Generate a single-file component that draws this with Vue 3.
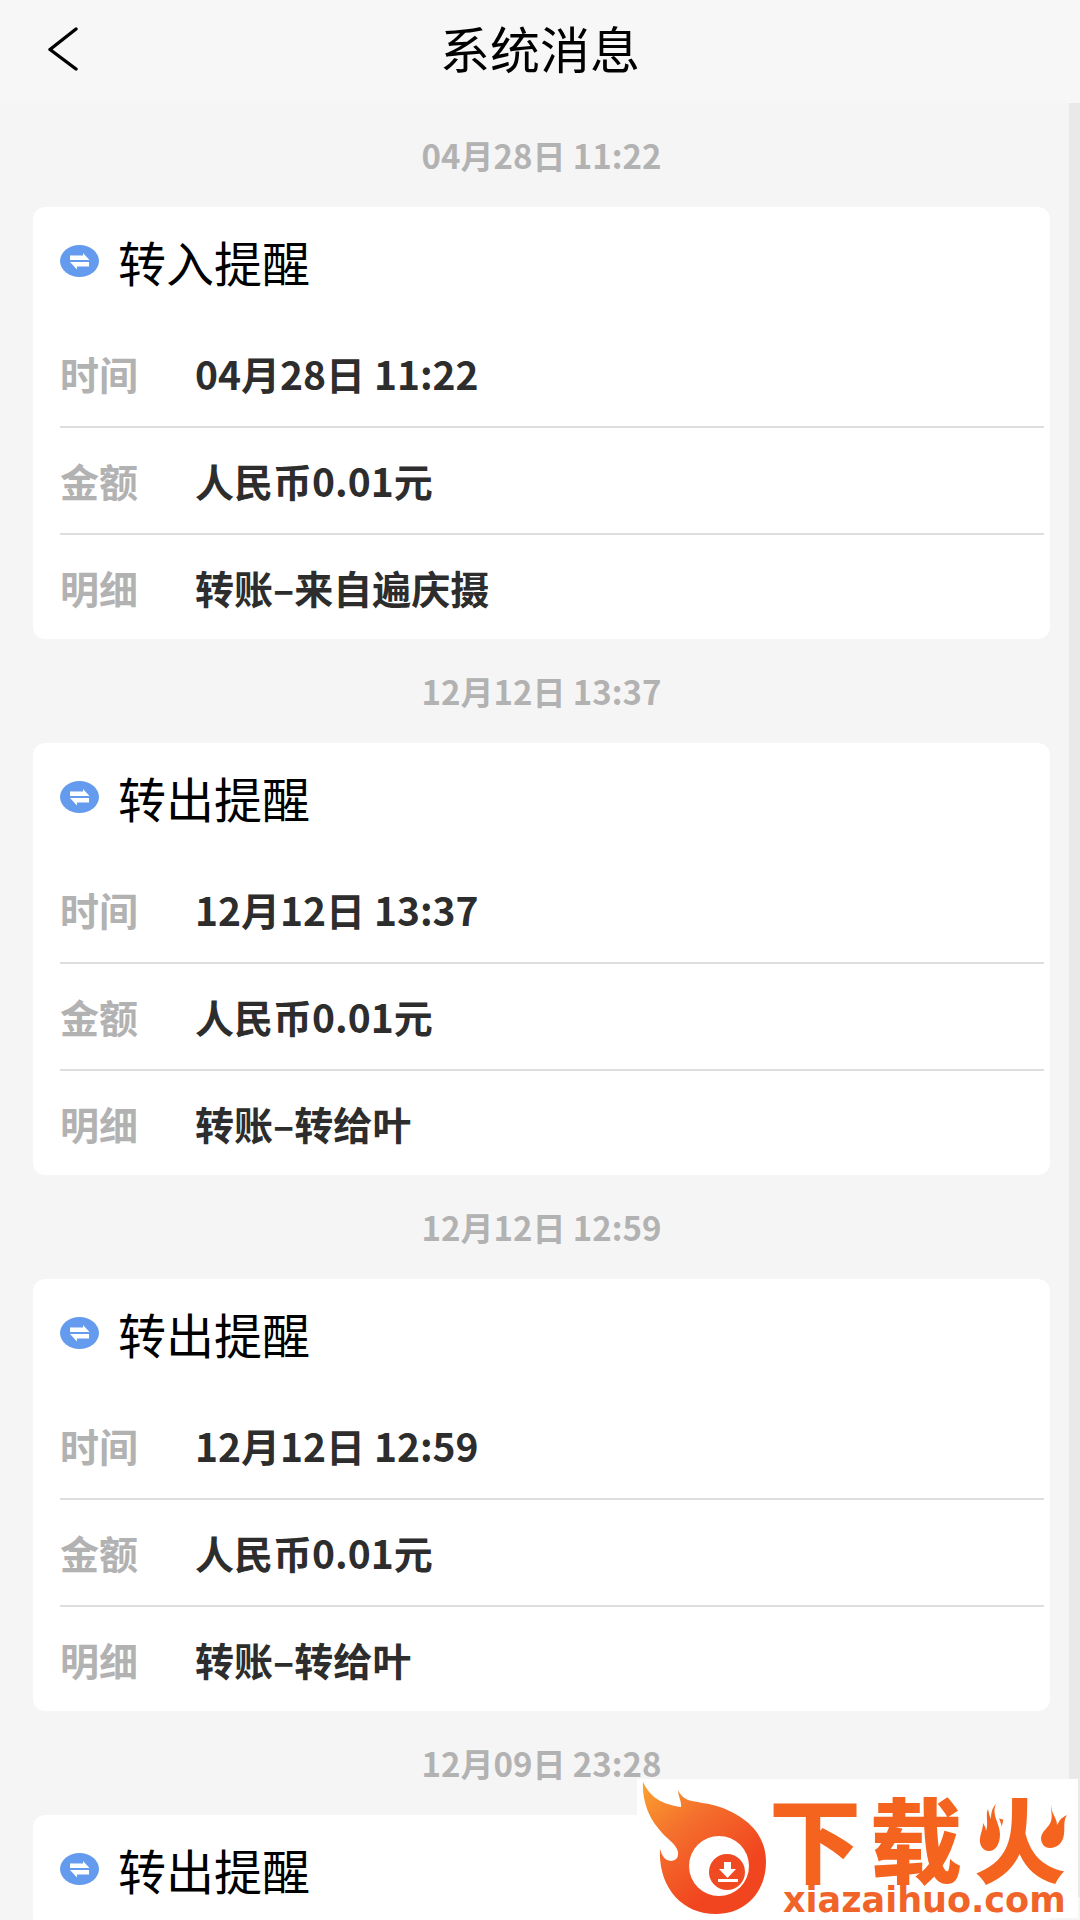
<script setup>
const groups = [
  {
    date: '04月28日 11:22',
    title: '转入提醒',
    rows: [
      { label: '时间', value: '04月28日 11:22' },
      { label: '金额', value: '人民币0.01元' },
      { label: '明细', value: '转账–来自遍庆摄' },
    ],
  },
  {
    date: '12月12日 13:37',
    title: '转出提醒',
    rows: [
      { label: '时间', value: '12月12日 13:37' },
      { label: '金额', value: '人民币0.01元' },
      { label: '明细', value: '转账–转给叶' },
    ],
  },
  {
    date: '12月12日 12:59',
    title: '转出提醒',
    rows: [
      { label: '时间', value: '12月12日 12:59' },
      { label: '金额', value: '人民币0.01元' },
      { label: '明细', value: '转账–转给叶' },
    ],
  },
  { date: '12月09日 23:28', title: '转出提醒', rows: [] },
]
</script>

<template>
  <div class="screen">
    <header class="bar">
      <button class="back" type="button" aria-label="返回">
        <svg width="32" height="44" viewBox="0 0 32 44" fill="none" stroke="#000" stroke-width="3.400" stroke-linecap="round" stroke-linejoin="round">
          <path d="M29 2 3 22.500 29 42" />
        </svg>
      </button>
      <h1>系统消息</h1>
    </header>

    <div class="body">
      <main class="list">
        <section v-for="(group, i) in groups" :key="i">
          <time class="date">{{ group.date }}</time>
          <article class="card">
            <h2>
              <svg width="39" height="32" viewBox="0 0 39 32">
                <ellipse cx="19.500" cy="16" rx="19.500" ry="16" fill="#659bee" />
                <path d="M10 10.500H23V8L29.500 15H10ZM29 21.500H17V24.500L10 17H29Z" fill="#fff" />
              </svg>
              <span>{{ group.title }}</span>
            </h2>
            <dl v-if="group.rows.length">
              <div v-for="row in group.rows" :key="row.label" class="row">
                <dt>{{ row.label }}</dt>
                <dd>{{ row.value }}</dd>
              </div>
            </dl>
          </article>
        </section>
      </main>
      <div class="track"></div>
    </div>

    <svg class="brand" width="441" height="139" viewBox="0 0 441 139">
      <defs>
        <linearGradient id="fire" x1="0" y1="0" x2="0.600" y2="0.800">
          <stop offset="0" stop-color="#fba32f" />
          <stop offset="0.450" stop-color="#f4702d" />
          <stop offset="1" stop-color="#f1451f" />
        </linearGradient>
      </defs>
      <rect width="441" height="139" fill="#fff" />
      <path
        fill="url(#fire)"
        d="M6 3C13 18 24 25 44 28C45 23 41 17 41 11Q44 18 51 21C62 24 72 24 83 28C110 38 129 55 129 83C129 113 108 135 79 135C45 135 21 108 23 70Q26 82 34 82Q42 81 41 73C39 64 29 60 21 49C11 37 5 20 6 3Z"
      />
      <circle cx="82" cy="87" r="30" fill="#fff" />
      <circle cx="90" cy="93" r="18" fill="#ef4a22" />
      <path d="M87 83h7v7h5l-8.500 9-8.500-9h5zM81 100h20v3H81z" fill="#fff" />
      <text class="brand-name" y="97"><tspan x="132">下</tspan><tspan x="233">载</tspan><tspan x="337">火</tspan></text>
      <path d="M398 66 408 30H434V60L412 68Z" fill="#fff" />
      <g class="sparks">
        <path d="M359 25C354 36 363 44 363 55C363 66 358 72 352 72C346 72 342 66 343 59C344 53 346 50 346 44Q349 48 349 52C352 44 348 36 351 30Q352 36 354 40C354 34 355 29 359 25Z" />
        <path d="M415 26C413 34 420 38 420 46Q424 38 430 36C426 42 428 48 427 55C426 64 420 69 413 69C407 69 404 64 404 59C405 51 412 49 414 42C416 36 413 31 415 26Z" />
      </g>
      <text class="brand-site" x="146" y="133">xiazaihuo.com</text>
    </svg>
  </div>
</template>

<style>
body {
  margin: 0;
  background: #f5f5f5;
}
</style>

<style scoped>
.screen {
  position: relative;
  display: flex;
  flex-direction: column;
  height: 100vh;
  overflow: hidden;
  background: #f5f5f5;
  font-family: "Noto Sans CJK SC", sans-serif;
}
.bar {
  display: grid;
  grid-template-columns: 1fr auto 1fr;
  align-items: center;
  flex: none;
  height: 103px;
  padding-bottom: 6px;
  box-sizing: border-box;
  background: #f7f7f7;
}
.back {
  display: flex;
  justify-self: start;
  margin-left: 47px;
  padding: 0;
  border: 0;
  background: none;
}
h1 {
  margin: 0;
  padding-bottom: 4px;
  font-size: 50px;
  font-weight: 400;
  line-height: 92px;
  color: #000;
}
.body {
  display: flex;
  flex: 1;
  min-height: 0;
}
.list {
  flex: 1;
  padding: 0 19px 0 33px;
  overflow: hidden;
}
.date {
  display: block;
  height: 104px;
  font-size: 33px;
  font-weight: 700;
  line-height: 104px;
  text-align: center;
  color: #b2b2b2;
}
.card {
  padding: 0 6px 0 27px;
  border-radius: 12px;
  background: #fff;
}
h2 {
  display: flex;
  align-items: center;
  gap: 19px;
  height: 114px;
  margin: 0;
  padding-bottom: 6px;
  box-sizing: border-box;
  font-size: 48px;
  font-weight: 400;
  line-height: 108px;
  color: #000;
}
dl {
  margin: 0;
}
.row {
  display: flex;
  height: 107px;
  box-sizing: border-box;
  border-bottom: 2px solid #dedede;
  font-size: 39px;
  font-weight: 700;
  line-height: 104px;
}
.row:last-child {
  height: 104px;
  border-bottom: 0;
}
dt {
  width: 135px;
  color: #b2b2b2;
}
dd {
  margin: 0;
  color: #2d2d2d;
}
.track {
  width: 11px;
  margin-bottom: 23px;
  background: #e9e9e9;
}
.brand {
  position: absolute;
  right: 2px;
  bottom: 2px;
  overflow: visible;
}
.brand-name {
  font-size: 92px;
  font-weight: 900;
  fill: #f4641e;
}
.sparks {
  fill: #f4641e;
  stroke: #fff;
  stroke-width: 6px;
  paint-order: stroke;
}
.brand-site {
  font-family: "DejaVu Sans", sans-serif;
  font-size: 35px;
  font-weight: 700;
  fill: #f0642a;
}
</style>
